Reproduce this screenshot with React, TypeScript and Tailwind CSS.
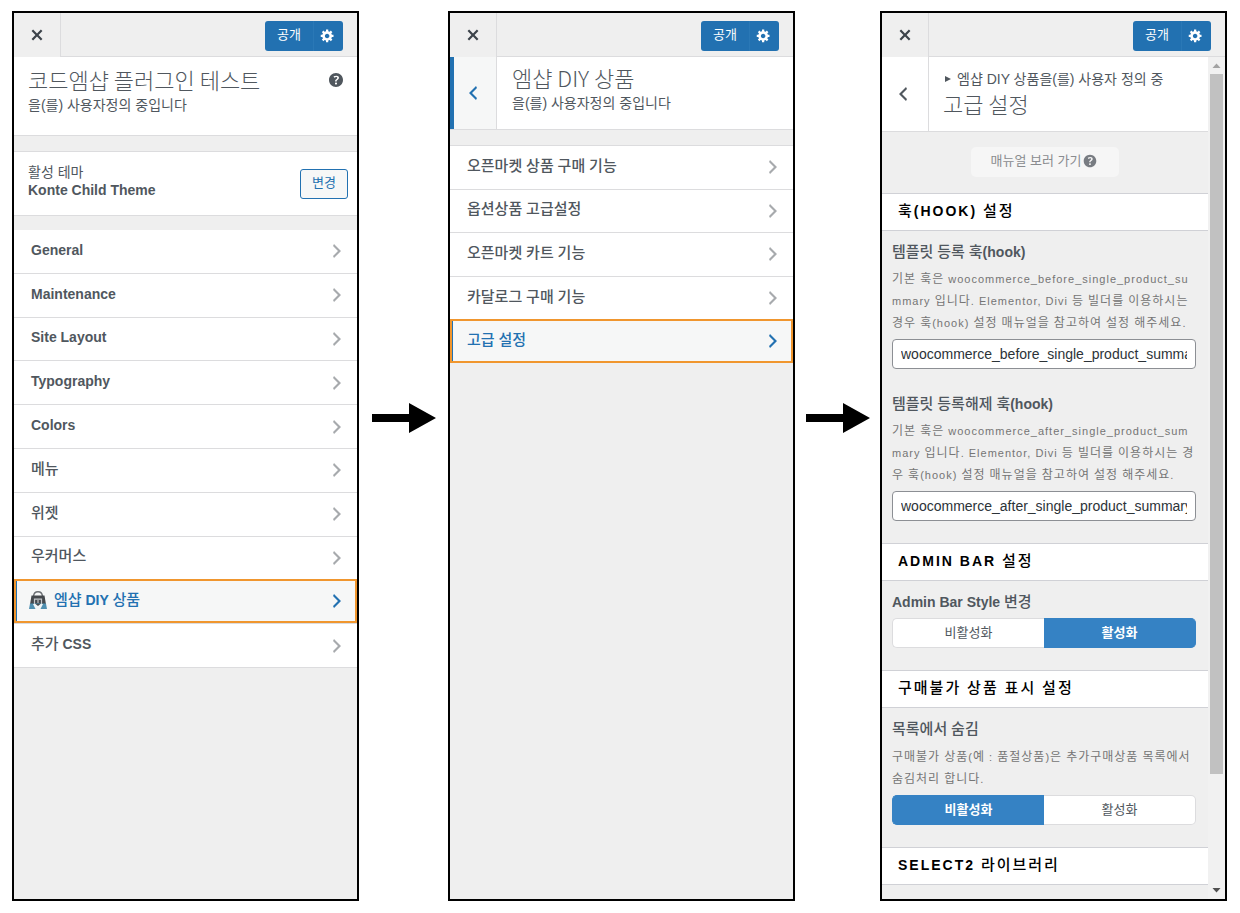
import type { ReactNode } from "react";

const CLOSE =
  "M14.95 6.46L11.41 10l3.54 3.54-1.41 1.41L10 11.42l-3.53 3.53-1.42-1.42L8.58 10 5.05 6.47l1.42-1.42L10 8.58l3.54-3.53z";
const RIGHT = "M6 15l5-5-5-5 1-2 7 7-7 7z";
const LEFT = "M14 5l-5 5 5 5-1 2-7-7 7-7z";
const GEAR =
  "M18 12h-2.18c-.17.7-.44 1.35-.81 1.93l1.54 1.54-2.1 2.1-1.54-1.54c-.58.36-1.23.63-1.91.79V19H8v-2.18c-.68-.16-1.33-.43-1.91-.79l-1.54 1.54-2.12-2.12 1.54-1.54c-.36-.58-.63-1.23-.79-1.91H1V9.03h2.17c.16-.7.44-1.35.8-1.94L2.43 5.55l2.1-2.1 1.54 1.54c.58-.37 1.24-.64 1.93-.81V2h3v2.18c.68.16 1.33.43 1.91.79l1.54-1.54 2.12 2.12-1.54 1.54c.36.59.64 1.24.8 1.94H18V12zm-8.5 1.5c1.66 0 3-1.34 3-3s-1.34-3-3-3-3 1.34-3 3 1.34 3 3 3z";
const HELP =
  "M17 10c0-3.87-3.14-7-7-7-3.87 0-7 3.13-7 7s3.13 7 7 7c3.86 0 7-3.13 7-7zm-6.3 1.48H9.14v-.43c0-.38.08-.7.24-.98s.46-.57.88-.89c.41-.29.68-.53.81-.71.14-.18.2-.39.2-.62 0-.25-.09-.44-.28-.58-.19-.13-.45-.19-.79-.19-.58 0-1.25.19-2 .57l-.64-1.28c.87-.49 1.8-.74 2.77-.74.81 0 1.45.2 1.92.58.48.39.71.91.71 1.55 0 .43-.09.8-.29 1.11-.19.32-.57.67-1.11 1.06-.38.28-.61.49-.71.63-.1.15-.15.34-.15.57v.35zm-1.47 2.74c-.18-.17-.27-.42-.27-.73 0-.33.08-.58.26-.75s.43-.25.77-.25c.32 0 .57.09.75.26s.27.42.27.74c0 .3-.09.55-.27.72-.18.18-.43.27-.75.27-.33 0-.58-.09-.76-.26z";

const Icon = ({ d, className }: { d: string; className: string }) => (
  <svg viewBox="0 0 20 20" fill="currentColor" aria-hidden="true" className={className}>
    <path d={d} />
  </svg>
);

// Hangul is set one step larger than the Latin text around it
const Mixed = ({ text, hangul }: { text: string; hangul: string }) => (
  <>
    {text.split(/([가-힣]+)/).map((part, i) =>
      i % 2 ? (
        <span key={i} className={hangul}>
          {part}
        </span>
      ) : (
        part
      )
    )}
  </>
);

const BagIcon = () => (
  <svg viewBox="0 0 18 18" aria-hidden="true" className="size-[18px] shrink-0">
    <path d="M4.5 5.5C5 -.8 13 -.8 13.5 5.5" fill="none" stroke="#6b6f73" strokeWidth="1.4" />
    <path d="M2.5 4.5h13l1.5 9H1z" fill="#45494d" />
    <path d="M1 12.5h16l1 5.5H0z" fill="#4f8fb0" />
    <path d="M4 13h10l-2.5 5h-5z" fill="#f1f5f6" />
    <path d="M5.5 13V8.2h7V13" fill="none" stroke="#c4c7ca" strokeWidth="1.2" />
    <path d="M9 9v3" fill="none" stroke="#c4c7ca" strokeWidth="1.2" />
    <path d="M6.5 13h5L9 15z" fill="#45494d" />
  </svg>
);

const Arrow = () => (
  <svg viewBox="0 0 64 32" aria-hidden="true" className="h-8 w-16">
    <path d="M0 12h37V1l27 15-27 15V20H0z" />
  </svg>
);

const TopBar = () => (
  <div className="flex h-11">
    <button
      type="button"
      aria-label="닫기"
      className="flex w-[47px] items-center justify-center border-r border-[#dcdcde] text-[#3c434a]"
    >
      <Icon d={CLOSE} className="size-[22px]" />
    </button>
    <div className="flex flex-1 items-start justify-end border-b border-[#dcdcde] pt-2 pr-3.5 text-white">
      <button type="button" className="h-[30px] w-12 rounded-l-[3px] bg-[#2271b1] pb-0.5 text-[13px] leading-[26px]">
        공개
      </button>
      <button
        type="button"
        aria-label="설정"
        className="flex h-[30px] w-[30px] items-center justify-center rounded-r-[3px] border-l border-[#2a78b6] bg-[#2271b1] pr-0.5 pb-px"
      >
        <Icon d={GEAR} className="size-[15px]" />
      </button>
    </div>
  </div>
);

const Panel = ({ children }: { children: ReactNode }) => (
  <section className="flex min-w-0 flex-1 flex-col border-2 border-black bg-[#efefef]">
    <TopBar />
    {children}
  </section>
);

type Item = { label: string; active?: boolean; icon?: boolean };

const rootItems: Item[] = [
  { label: "General" },
  { label: "Maintenance" },
  { label: "Site Layout" },
  { label: "Typography" },
  { label: "Colors" },
  { label: "메뉴" },
  { label: "위젯" },
  { label: "우커머스" },
  { label: "엠샵 DIY 상품", active: true, icon: true },
  { label: "추가 CSS" },
];

const diyItems: Item[] = [
  { label: "오픈마켓 상품 구매 기능" },
  { label: "옵션상품 고급설정" },
  { label: "오픈마켓 카트 기능" },
  { label: "카달로그 구매 기능" },
  { label: "고급 설정", active: true },
];

const MenuItem = ({ item }: { item: Item }) => (
  <li className="grid">
    <a
      href="#"
      className={
        item.active
          ? "flex items-center justify-between border-l-3 border-[#2271b1] bg-[#f6f7f7] pr-2.5 pl-3.5 text-[#2271b1] outline-2 -outline-offset-2 outline-[#f0962e]"
          : "flex items-center justify-between border-t border-[#dcdcde] bg-white pr-2.5 pl-[17px] text-[#50575e]"
      }
    >
      <span className={item.icon ? "-ml-0.5 flex items-center gap-[7px] pb-0.5" : "flex items-center pb-[3px]"}>
        {item.icon && <BagIcon />}
        <span className="text-sm leading-5 font-bold">
          <Mixed text={item.label} hangul="text-[15px] font-medium" />
        </span>
      </span>
      <Icon d={RIGHT} className={item.active ? "size-5" : "size-5 text-[#a7aaad]"} />
    </a>
  </li>
);

const titleClass = "font-['Noto_Sans_CJK_KR',sans-serif] text-[22px] leading-5 font-light";

const SectionTitle = ({ text }: { text: string }) => (
  <h3 className="border-y border-[#d0d1d6] bg-white pb-0.5 pl-4 text-sm leading-[34px] font-bold tracking-[2px] text-black">
    <Mixed text={text} hangul="text-[15px] font-medium" />
  </h3>
);

const labelClass = "mb-1.5 block text-sm leading-5 font-bold text-[#50575e]";

const Description = ({ text }: { text: string }) => (
  <p className="mt-px mb-[5px] text-[11px] leading-[22px] tracking-[1px] break-all text-[#757575]">
    <Mixed text={text} hangul="text-xs" />
  </p>
);

const TextField = ({ id, label, desc, value }: { id: string; label: string; desc: string; value: string }) => (
  <div>
    <label htmlFor={id} className={labelClass}>
      <Mixed text={label} hangul="text-[15px] font-medium" />
    </label>
    <Description text={desc} />
    <input
      id={id}
      type="text"
      defaultValue={value}
      className="h-[30px] w-full rounded-[4px] border border-[#8c8f94] bg-white px-2 text-sm text-[#2c3338]"
    />
  </div>
);

const Toggle = ({ name, label, desc, on }: { name: string; label: string; desc?: string; on: boolean }) => (
  <fieldset>
    <legend className={labelClass}>
      <Mixed text={label} hangul="text-[15px] font-medium" />
    </legend>
    {desc && <Description text={desc} />}
    <div className="relative grid grid-cols-2 text-center text-[13px] leading-7 text-[#50575e]">
      <label className="rounded-l-[5px] border border-r-0 border-[#dcdcde] bg-white has-checked:border-[#3582c4] has-checked:bg-[#3582c4] has-checked:font-bold has-checked:text-white">
        <input type="radio" name={name} defaultChecked={!on} className="sr-only" />
        비활성화
      </label>
      <label className="rounded-r-[5px] border border-l-0 border-[#dcdcde] bg-white has-checked:border-[#3582c4] has-checked:bg-[#3582c4] has-checked:font-bold has-checked:text-white">
        <input type="radio" name={name} defaultChecked={on} className="sr-only" />
        활성화
      </label>
    </div>
  </fieldset>
);

const ScrollBar = () => (
  <div aria-hidden="true" className="flex w-[17px] flex-col items-center bg-[#f1f1f1]">
    <svg viewBox="0 0 17 17" className="size-[17px] shrink-0 text-[#a3a3a3]">
      <path d="M8.5 6.5L12.5 11h-8z" fill="currentColor" />
    </svg>
    <div className="w-[13px] grow-[700] bg-[#c1c1c1]" />
    <div className="grow-[108]" />
    <svg viewBox="0 0 17 17" className="size-[17px] shrink-0 text-[#505050]">
      <path d="M8.5 10.5L12.5 6h-8z" fill="currentColor" />
    </svg>
  </div>
);

const RootPanel = () => (
  <Panel>
    <div className="mb-[15px] flex items-start justify-between border-b border-[#dcdcde] bg-white pt-3 pr-[11px] pb-5 pl-3.5 text-[#50575e]">
      <div>
        <h1 className={titleClass}>코드엠샵 플러그인 테스트</h1>
        <p className="mt-1.5 text-sm leading-5">을(를) 사용자정의 중입니다</p>
      </div>
      <button type="button" aria-label="도움말" className="mt-px">
        <Icon d={HELP} className="size-5" />
      </button>
    </div>
    <div className="flex items-center justify-between border-y border-[#dcdcde] bg-white pt-2.5 pr-[9px] pb-[9px] pl-3.5 text-[#50575e]">
      <div className="pb-[7px] text-sm leading-[18px]">
        <p>활성 테마</p>
        <p className="font-bold">Konte Child Theme</p>
      </div>
      <button
        type="button"
        className="my-[7px] h-[30px] w-12 rounded-[3px] border border-[#2271b1] bg-[#f6f7f7] pb-0.5 text-[13px] leading-6 text-[#2271b1]"
      >
        변경
      </button>
    </div>
    <ul className="mt-[13px] grid h-[439px] auto-rows-fr border-b border-[#dcdcde] [&>li:first-child>a]:border-[#efefef]">
      {rootItems.map((item) => (
        <MenuItem key={item.label} item={item} />
      ))}
    </ul>
  </Panel>
);

const DiyPanel = () => (
  <Panel>
    <div className="mb-[15px] flex border-b border-[#dcdcde] bg-white text-[#50575e]">
      <button
        type="button"
        aria-label="뒤로"
        className="flex w-[47px] items-center justify-center border-r border-l-4 border-r-[#dcdcde] border-l-[#2271b1] bg-[#f6f7f7] pr-1 text-[#2271b1]"
      >
        <Icon d={LEFT} className="size-5" />
      </button>
      <div className="pt-2.5 pb-4 pl-[15px]">
        <h2 className={titleClass}>엠샵 DIY 상품</h2>
        <p className="mt-1.5 text-sm leading-5">을(를) 사용자정의 중입니다</p>
      </div>
    </div>
    <ul className="grid h-[218px] auto-rows-fr">
      {diyItems.map((item) => (
        <MenuItem key={item.label} item={item} />
      ))}
    </ul>
  </Panel>
);

const AdvancedPanel = () => (
  <Panel>
    <div className="flex flex-1">
      <div className="min-w-0 flex-1">
        <div className="flex border-b border-[#dcdcde] bg-white text-[#50575e]">
          <button
            type="button"
            aria-label="뒤로"
            className="flex w-[47px] items-center justify-center border-r border-[#dcdcde] pr-1"
          >
            <Icon d={LEFT} className="size-5" />
          </button>
          <div className="flex flex-col gap-0.5 pt-2.5 pb-[18px] pl-3.5">
            <p className="flex items-center gap-1.5 text-sm leading-6">
              <svg viewBox="0 0 6 6" aria-hidden="true" className="ml-0.5 size-1.5">
                <path d="M0 0l6 3-6 3z" fill="currentColor" />
              </svg>
              엠샵 DIY 상품을(를) 사용자 정의 중
            </p>
            <h2 className={titleClass}>고급 설정</h2>
          </div>
        </div>
        <div className="flex justify-center pt-[15px] pb-4">
          <a
            href="#"
            className="flex h-[30px] items-center justify-center rounded-[5px] bg-[#f6f6f6] px-5 pb-0.5 text-[13px] leading-5 text-[#8a8c8f]"
          >
            매뉴얼 보러 가기
            <Icon d={HELP} className="size-[18px] text-[#787c82]" />
          </a>
        </div>

        <SectionTitle text="훅(HOOK) 설정" />
        <div className="grid gap-[25px] pt-[11px] pr-3 pb-[22px] pl-2.5">
          <TextField
            id="hook-add"
            label="템플릿 등록 훅(hook)"
            desc="기본 훅은 woocommerce_before_single_product_summary 입니다. Elementor, Divi 등 빌더를 이용하시는 경우 훅(hook) 설정 매뉴얼을 참고하여 설정 해주세요."
            value="woocommerce_before_single_product_summary"
          />
          <TextField
            id="hook-remove"
            label="템플릿 등록해제 훅(hook)"
            desc="기본 훅은 woocommerce_after_single_product_summary 입니다. Elementor, Divi 등 빌더를 이용하시는 경우 훅(hook) 설정 매뉴얼을 참고하여 설정 해주세요."
            value="woocommerce_after_single_product_summary"
          />
        </div>

        <SectionTitle text="ADMIN BAR 설정" />
        <div className="pt-[11px] pr-3 pb-[22px] pl-2.5">
          <Toggle name="admin-bar" label="Admin Bar Style 변경" on />
        </div>

        <SectionTitle text="구매불가 상품 표시 설정" />
        <div className="pt-[11px] pr-3 pb-[22px] pl-2.5">
          <Toggle
            name="hide-list"
            label="목록에서 숨김"
            desc="구매불가 상품(예 : 품절상품)은 추가구매상품 목록에서 숨김처리 합니다."
            on={false}
          />
        </div>

        <SectionTitle text="SELECT2 라이브러리" />
      </div>
      <ScrollBar />
    </div>
  </Panel>
);

export default function App() {
  return (
    <main className="flex min-h-screen bg-white pt-[11px] pr-[13px] pb-3 pl-3 font-['Liberation_Sans','Noto_Sans_CJK_KR',sans-serif]">
      <RootPanel />
      <div className="flex w-[89px] shrink-0 items-center justify-center pb-[76px]">
        <Arrow />
      </div>
      <DiyPanel />
      <div className="flex w-[85px] shrink-0 items-center justify-center pb-[76px]">
        <Arrow />
      </div>
      <AdvancedPanel />
    </main>
  );
}
